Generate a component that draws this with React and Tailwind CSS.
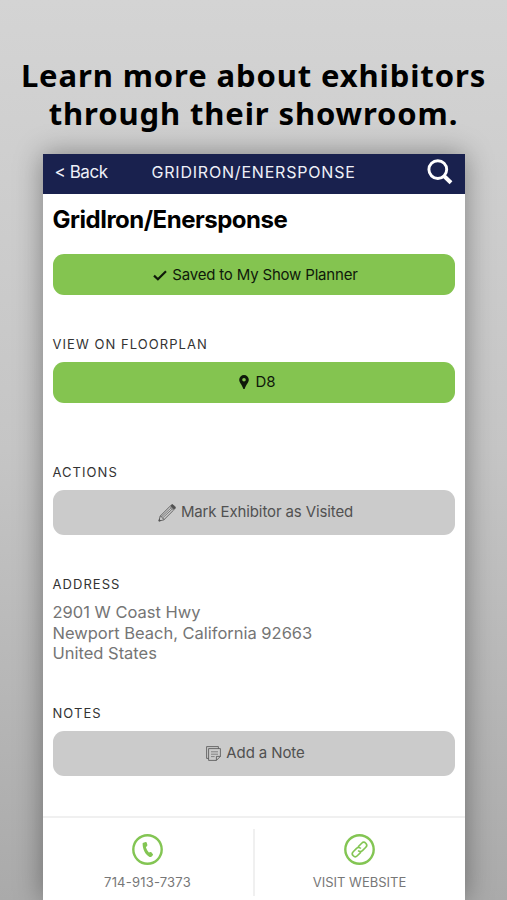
import clsx from "clsx";

const CheckIcon = () => (
   <svg className="w-[14px] h-[11px]" viewBox="0 0 14 11" fill="none" stroke="currentColor" strokeWidth="2.2">
      <path d="M1 5.6 4.9 9.2 13 1.2" />
   </svg>
);

const PinIcon = () => (
   <svg className="w-[10px] h-[14px] -mt-0.5" viewBox="0 0 10 14" fill="currentColor">
      <path
         fillRule="evenodd"
         d="M5 0a4.8 4.8 0 0 1 4.8 4.8C9.8 7.6 7 9.8 5.8 13.6a.8.8 0 0 1-1.6 0C3 9.8.2 7.6.2 4.8A4.8 4.8 0 0 1 5 0Zm0 3a1.8 1.8 0 1 0 0 3.6A1.8 1.8 0 0 0 5 3Z"
      />
   </svg>
);

const PencilIcon = () => (
   <svg className="w-[18px] h-[18px]" viewBox="0 0 19 19" fill="none" stroke="currentColor" strokeWidth="0.9" strokeLinejoin="round">
      <path d="M1 18 2.3 12.8 12.6 2.5 16.5 6.4 6.2 16.7Z" />
      <path d="M2.3 12.8 4 13.2 4.4 14.9 5.9 15.3 6.2 16.7M4 13.2 14 3.9M5 14.6 15.2 5.1" strokeWidth="0.7" />
      <path d="M13.4 1.8 14.3.9Q15.2.3 16 1L18 3Q18.7 3.9 18 4.7L17.2 5.6Z" fill="currentColor" />
      <path d="M1 18 1.5 16.2 2.7 17.5Z" fill="currentColor" />
   </svg>
);

const NoteIcon = () => (
   <svg className="w-[15px] h-[15px]" viewBox="0 0 15 15" fill="none" stroke="currentColor" strokeWidth="0.8">
      <path d="M2.6 12.4H.6V.6H12.4V2.6" />
      <path d="M2.6 2.6H14.4V10.4L10.4 14.4H2.6Z" />
      <path d="M14.4 10.4H10.4V14.4" />
      <path d="M5 5.8H12M5 8.2H12M5 10.6H8.6" strokeWidth="0.6" />
   </svg>
);

const PhoneIcon = () => (
   <svg className="w-[31px] h-[31px]" viewBox="0 0 31 31">
      <circle cx="15.5" cy="15.5" r="14.2" fill="none" stroke="currentColor" strokeWidth="2.4" />
      <path
         fill="currentColor"
         d="M11.4 8.7 13.7 7.9Q14.4 7.8 14.7 8.5L15.4 11Q15.5 11.6 15 12L13.9 13.2Q14.7 16.3 16.9 18.4L18.4 18Q19 17.9 19.4 18.3L20.9 20.2Q21.3 20.8 20.8 21.3L19.1 22.9Q18.5 23.3 17.6 22.9C13.5 21 10.7 15.6 10.6 9.8Q10.6 8.9 11.4 8.7Z"
      />
   </svg>
);

const LinkIcon = () => (
   <svg className="w-[31px] h-[31px]" viewBox="0 0 31 31" fill="none" stroke="currentColor">
      <circle cx="15.5" cy="15.5" r="14.2" strokeWidth="2.4" />
      <g transform="rotate(-45 15.5 15.5)" strokeWidth="1.6">
         <path d="M15 17.7 14 18.4H9.5A2.9 2.9 0 0 1 9.5 12.6H14.2A2.9 2.9 0 0 1 17.1 15.8" />
         <path d="M16 13.3 17 12.6H21.5A2.9 2.9 0 0 1 21.5 18.4H16.8A2.9 2.9 0 0 1 13.9 15.2" />
      </g>
   </svg>
);

const SearchIcon = () => (
   <svg className="w-[26px] h-[26px]" viewBox="0 0 26 26" fill="none" stroke="currentColor">
      <circle cx="10.8" cy="10.6" r="8.9" strokeWidth="2.9" />
      <path d="M17 17 24 23.8" strokeWidth="4" />
   </svg>
);

function SectionLabel({ children, className }) {
   return (
      <h2 className={clsx("h-5 leading-5 text-[13px] text-[#333] tracking-[1.05px] whitespace-nowrap", className)}>
         {children}
      </h2>
   );
}

function ActionButton({ icon, children, className }) {
   return (
      <button
         className={clsx(
            "w-full flex items-center justify-center rounded-[11px] text-[15px] whitespace-nowrap",
            className
         )}
      >
         {icon}
         <span>{children}</span>
      </button>
   );
}

function ContactLink({ icon, children, className }) {
   return (
      <a className="flex-1 flex flex-col items-center pt-[16px] text-[#83c553]">
         {icon}
         <span className={clsx("mt-[7px] text-[13px] leading-5 text-[#777]", className)}>{children}</span>
      </a>
   );
}

function App() {
   return (
      <div className="w-[507px] h-[900px] overflow-hidden flex flex-col items-center bg-linear-to-b from-[#d4d4d4] via-[#c5c5c5] to-[#aaaaaa] font-['Inter',sans-serif]">
         <h1 className="mt-[56px] h-[98px] shrink-0 text-center text-[31px] leading-[38px] font-bold text-black tracking-[0.88px] whitespace-nowrap font-['Noto_Sans',sans-serif]">
            Learn more about exhibitors
            <br />
            through their showroom.
         </h1>

         <div className="w-[422px] h-[746px] shrink-0 flex flex-col bg-white shadow-[0_0_26px_rgba(0,0,0,0.38)]">
            <header className="h-10 shrink-0 flex items-center pl-3 pr-3 bg-[#19214e] text-[#eef0f8]">
               <span className="w-[97px] pb-[3px] text-[17px] tracking-[-0.45px] whitespace-nowrap">&lt; Back</span>
               <span className="flex-1 pb-[5px] text-base tracking-[0.8px] whitespace-nowrap">GRIDIRON/ENERSPONSE</span>
               <span className="pb-[5px] text-white">
                  <SearchIcon />
               </span>
            </header>

            <main className="flex-1 px-[10px] pt-2.5">
               <h1 className="h-8 leading-8 text-[24px] font-bold text-black tracking-[-0.49px] whitespace-nowrap">
                  GridIron/Enersponse
               </h1>
               <ActionButton
                  icon={<CheckIcon />}
                  className="mt-[18px] h-[41px] pl-1 pt-px gap-[5px] bg-[#84c450] text-[#0f190a] tracking-[-0.18px]"
               >
                  Saved to My Show Planner
               </ActionButton>

               <SectionLabel className="mt-[39px]">VIEW ON FLOORPLAN</SectionLabel>
               <ActionButton
                  icon={<PinIcon />}
                  className="mt-2 h-[41px] pl-[7px] gap-[7px] bg-[#84c450] text-[#0f190a] tracking-[-0.1px]"
               >
                  D8
               </ActionButton>

               <SectionLabel className="mt-[59px]">ACTIONS</SectionLabel>
               <ActionButton
                  icon={<PencilIcon />}
                  className="mt-2 h-[45px] pl-[4px] gap-[5px] bg-[#cbcbcb] text-[#515151] tracking-[-0.12px]"
               >
                  Mark Exhibitor as Visited
               </ActionButton>

               <SectionLabel className="mt-[39px]">ADDRESS</SectionLabel>
               <address className="mt-2 not-italic text-[16.5px] leading-[20.6px] text-[#757575] tracking-[-0.01px] whitespace-nowrap">
                  2901 W Coast Hwy
                  <br />
                  Newport Beach, California 92663
                  <br />
                  United States
               </address>

               <SectionLabel className="mt-[39px]">NOTES</SectionLabel>
               <ActionButton
                  icon={<NoteIcon />}
                  className="mt-2 h-[45px] pl-[4px] gap-[5px] bg-[#cbcbcb] text-[#515151] tracking-[-0.1px]"
               >
                  Add a Note
               </ActionButton>
            </main>

            <footer className="h-[84px] shrink-0 flex border-t-2 border-[#f0f0f0]">
               <ContactLink icon={<PhoneIcon />} className="tracking-[0.2px]">714-913-7373</ContactLink>
               <div className="mt-[11px] w-0.5 h-[67px] bg-[#f0f0f0]" />
               <ContactLink icon={<LinkIcon />}>VISIT WEBSITE</ContactLink>
            </footer>
         </div>
      </div>
   );
}

export default App;
